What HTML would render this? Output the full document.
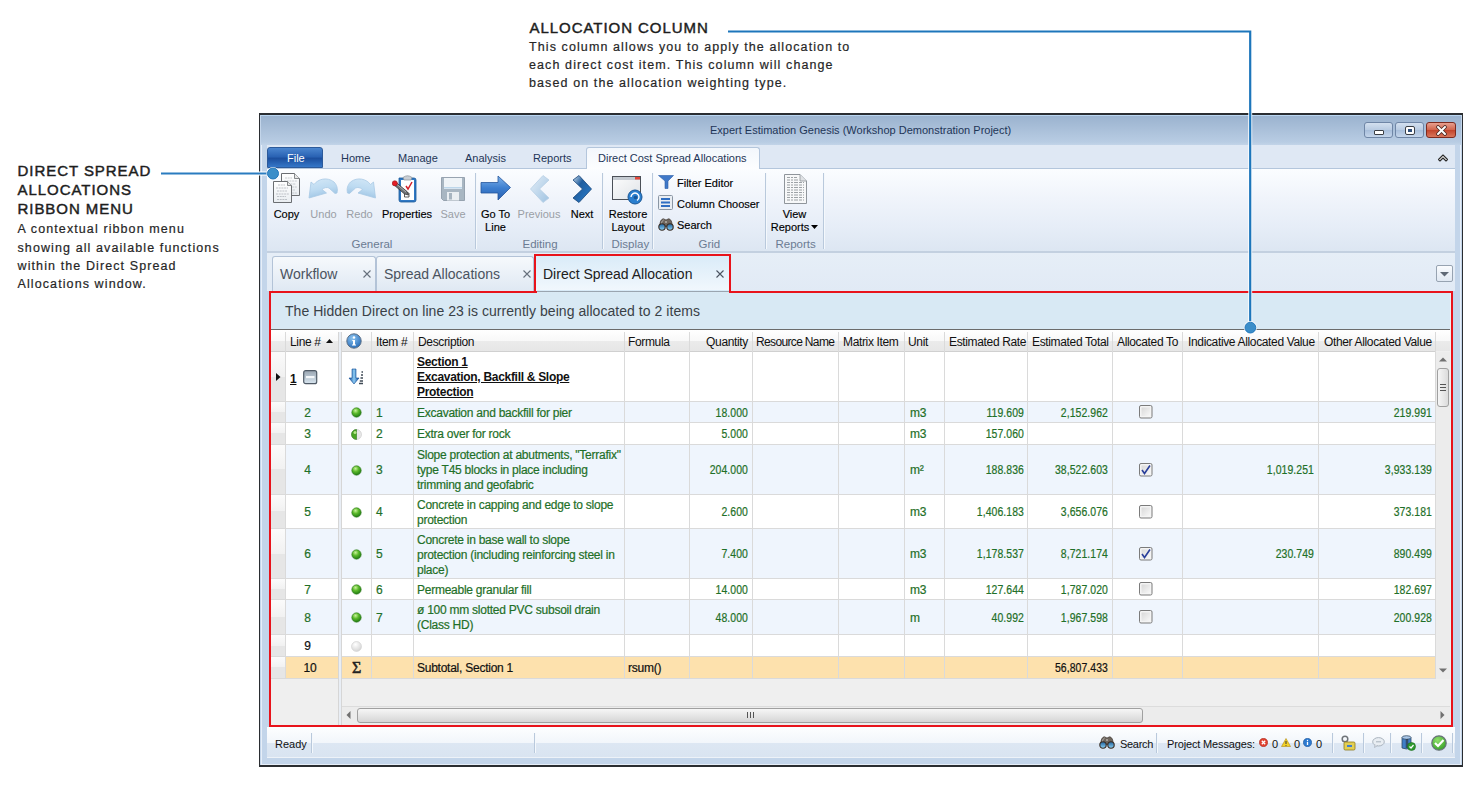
<!DOCTYPE html><html><head><meta charset="utf-8"><style>
*{margin:0;padding:0;box-sizing:border-box}
html,body{width:1480px;height:786px;overflow:hidden;background:#fff;font-family:"Liberation Sans",sans-serif}
.abs{position:absolute}
.t{position:absolute;white-space:nowrap;line-height:1}
.ann-h{position:absolute;font-weight:normal;-webkit-text-stroke:0.45px #1d1d1d;color:#1d1d1d;font-size:15px;letter-spacing:0.95px;line-height:19.3px;white-space:nowrap}
.ann-b{position:absolute;color:#262626;-webkit-text-stroke:0.2px #262626;font-size:12.5px;letter-spacing:1.1px;line-height:18.2px;white-space:nowrap}
.rl{position:absolute;font-size:11px;color:#000;-webkit-text-stroke:0.15px currentColor;text-align:center;line-height:13px;white-space:nowrap}
.rl.dis{color:#9a9fa6;-webkit-text-stroke:0}
.gl{position:absolute;font-size:11.5px;color:#6b7b92;white-space:nowrap;line-height:1}
.sep{position:absolute;width:1px;background:#b9c9dc;box-shadow:1px 0 0 #f4f8fc}
.cell{position:absolute;font-size:12px;letter-spacing:-0.25px;-webkit-text-stroke:0.2px currentColor;line-height:15px;white-space:nowrap;overflow:visible}
.g{color:#1f7028}
.num{letter-spacing:0.1px;transform:scaleX(0.87);transform-origin:100% 50%}
.vl{position:absolute;width:1px;background:#dadada}
.hl{position:absolute;height:1px;background:#dadada}
</style></head><body>

<div class="ann-h" style="left:17.5px;top:160.6px">DIRECT SPREAD<br>ALLOCATIONS<br>RIBBON MENU</div>
<div class="ann-b" style="left:17.5px;top:220.3px">A contextual ribbon menu<br>showing all available functions<br>within the Direct Spread<br>Allocations window.</div>
<div class="ann-h" style="left:529.5px;top:17.5px">ALLOCATION COLUMN</div>
<div class="ann-b" style="left:529px;top:37.5px">This column allows you to apply the allocation to<br>each direct cost item. This column will change<br>based on the allocation weighting type.</div>
<div class="abs" style="left:259px;top:112.8px;width:1203.5px;height:653.8px;border:1.5px solid #2a2d31;border-top-width:2px;border-bottom-width:2px;background:#c3d5ea"></div>
<div class="abs" style="left:260.5px;top:114.8px;width:1200.5px;height:649.8px;border:1px solid #e6eef8;border-top:none"></div>
<div class="abs" style="left:260.5px;top:114.8px;width:1200.5px;height:30.2px;background:linear-gradient(#b9d5f0 0,#b9d5f0 1px,#9bb3cf 1.2px,#b8cce3 90%,#c2d4e8)"></div>
<div class="t" style="left:710px;top:125px;font-size:11px;color:#1e3557">Expert Estimation Genesis (Workshop Demonstration Project)</div>
<div class="abs" style="left:1364px;top:122px;width:29px;height:16px;border:1px solid #6f86a6;border-radius:3px;background:linear-gradient(#d3e0ef,#b8cbe2 50%,#a7bedb 51%,#c4d5ea)"><div class="abs" style="left:9px;top:7px;width:10px;height:5px;border:1px solid #3b3f45;background:#fff;border-radius:1px"></div></div>
<div class="abs" style="left:1395px;top:122px;width:29px;height:16px;border:1px solid #6f86a6;border-radius:3px;background:linear-gradient(#d3e0ef,#b8cbe2 50%,#a7bedb 51%,#c4d5ea)"><div class="abs" style="left:9px;top:3px;width:10px;height:9px;border:1px solid #3b3f45;border-radius:2px;background:#fff"><div class="abs" style="left:2px;top:2px;width:4px;height:3px;background:#2f4f7a"></div></div></div>
<div class="abs" style="left:1426px;top:122px;width:30px;height:16px;border:1px solid #7d2a1e;border-radius:3px;background:linear-gradient(#e8a08f,#d0634b 50%,#c2432a 51%,#d9765c)"><svg class="abs" style="left:8px;top:2px" width="13" height="11" viewBox="0 0 13 11"><path d="M3 2 L10 9 M10 2 L3 9" stroke="#4a2a24" stroke-width="3.6" stroke-linecap="round"/><path d="M3 2 L10 9 M10 2 L3 9" stroke="#fff" stroke-width="2" stroke-linecap="round"/></svg></div>
<div class="abs" style="left:267px;top:145px;width:1188px;height:23px;background:#dfe8f4"></div>
<div class="abs" style="left:267px;top:168px;width:1188px;height:1px;background:#b4c6dc"></div>
<div class="abs" style="left:267px;top:147px;width:56px;height:21px;border-radius:3px 3px 0 0;background:linear-gradient(#4b86cf,#2a63b4 45%,#1c4f9e 55%,#3577c8);border:1px solid #2c5a9a"></div>
<div class="t" style="left:287px;top:153px;font-size:11px;color:#fff">File</div>
<div class="t" style="left:341px;top:153px;font-size:11px;color:#1e3557">Home</div>
<div class="t" style="left:398px;top:153px;font-size:11px;color:#1e3557">Manage</div>
<div class="t" style="left:465px;top:153px;font-size:11px;color:#1e3557">Analysis</div>
<div class="t" style="left:533px;top:153px;font-size:11px;color:#1e3557">Reports</div>
<div class="abs" style="left:586px;top:147px;width:174px;height:23px;border:1px solid #b4c6dc;border-bottom:none;border-radius:3px 3px 0 0;background:linear-gradient(#f3f7fc,#fdfeff)"></div>
<div class="t" style="left:598px;top:153px;font-size:11px;color:#1e3557">Direct Cost Spread Allocations</div>
<svg class="abs" style="left:1437px;top:152px" width="12" height="10" viewBox="0 0 12 10"><path d="M1.5 7.5 L6 3 L10.5 7.5 L9 9 L6 6 L3 9 Z" fill="#fff" stroke="#2b2b2b" stroke-width="1.1" stroke-linejoin="round"/></svg>
<div class="abs" style="left:267px;top:169px;width:1188px;height:83px;background:linear-gradient(#fbfdff,#f0f4fb 35%,#e6edf7 70%,#dce6f2)"></div>
<div class="abs" style="left:267px;top:251px;width:1188px;height:2px;background:#c3d0e0"></div>
<div class="sep" style="left:474.5px;top:173px;height:76px"></div>
<div class="sep" style="left:602.3px;top:173px;height:76px"></div>
<div class="sep" style="left:652.3px;top:173px;height:76px"></div>
<div class="sep" style="left:765px;top:173px;height:76px"></div>
<div class="sep" style="left:823px;top:173px;height:76px"></div>
<div class="gl" style="left:351.5px;top:238.5px">General</div>
<div class="gl" style="left:522.5px;top:238.5px">Editing</div>
<div class="gl" style="left:611.5px;top:238.5px">Display</div>
<div class="gl" style="left:698.5px;top:238.5px">Grid</div>
<div class="gl" style="left:775.5px;top:238.5px">Reports</div>
<div class="rl" style="left:246.5px;top:208px;width:80px">Copy</div>
<div class="rl dis" style="left:283.5px;top:208px;width:80px">Undo</div>
<div class="rl dis" style="left:319.5px;top:208px;width:80px">Redo</div>
<div class="rl" style="left:367.0px;top:208px;width:80px">Properties</div>
<div class="rl dis" style="left:413.0px;top:208px;width:80px">Save</div>
<div class="rl" style="left:455.5px;top:208px;width:80px">Go To<br>Line</div>
<div class="rl dis" style="left:499.0px;top:208px;width:80px">Previous</div>
<div class="rl" style="left:542.0px;top:208px;width:80px">Next</div>
<div class="rl" style="left:588.0px;top:208px;width:80px">Restore<br>Layout</div>
<div class="rl" style="left:754.5px;top:208px;width:80px">View<br>Reports<svg width="7" height="4" style="margin-left:2px;vertical-align:2px"><path d="M0 0H7L3.5 4Z" fill="#000"/></svg></div>
<div class="t" style="left:677px;top:177.5px;font-size:11px;color:#000;-webkit-text-stroke:0.15px #000">Filter Editor</div>
<div class="t" style="left:677px;top:199px;font-size:11px;color:#000;-webkit-text-stroke:0.15px #000">Column Chooser</div>
<div class="t" style="left:677px;top:220px;font-size:11px;color:#000;-webkit-text-stroke:0.15px #000">Search</div>
<!-- Copy -->
<svg class="abs" style="left:272px;top:172px" width="30" height="32" viewBox="0 0 30 32">
<defs><linearGradient id="pg" x1="0" y1="0" x2="0" y2="1"><stop offset="0" stop-color="#fff"/><stop offset="1" stop-color="#e9edf1"/></linearGradient></defs>
<path d="M9.5 1.5 H22.5 L27.5 6.5 V23.5 H9.5 Z" fill="url(#pg)" stroke="#6b6e72" stroke-width="1"/>
<path d="M22.5 1.5 V6.5 H27.5" fill="#e6e6e6" stroke="#6b6e72" stroke-width="0.8"/>
<path d="M13 6 H20 M12 9 H25 M13 12 H24 M12 15 H25 M13 18 H23 M12 21 H25" stroke="#a9aeb5" stroke-width="0.6" stroke-dasharray="2 0.7"/>
<path d="M1.5 9.5 H15.5 L19.5 13.5 V30.5 H1.5 Z" fill="url(#pg)" stroke="#6b6e72" stroke-width="1"/>
<path d="M15.5 9.5 V13.5 H19.5" fill="#e6e6e6" stroke="#6b6e72" stroke-width="0.8"/>
<path d="M6 13 H13 M4 16 H16 M5 19 H15 M4 22 H17 M5 24.5 H14 M5 27.5 H15" stroke="#9aa0a7" stroke-width="0.6" stroke-dasharray="2 0.7"/>
</svg>
<!-- Undo -->
<svg class="abs" style="left:305px;top:172px" width="40" height="32" viewBox="0 0 40 32">
<defs><linearGradient id="ug" x1="0" y1="0" x2="0.3" y2="1"><stop offset="0" stop-color="#d4e8f7"/><stop offset="0.6" stop-color="#bcdaf1"/><stop offset="1" stop-color="#9fc5e4"/></linearGradient></defs>
<path d="M4 26 L6 10 L9 12.5 C13 7 22 4.5 29 10 C32 13 33 17 32 21 L30 21.5 L24 16 C22 15 19 15.5 17 17.5 L21.5 21 Z" fill="url(#ug)" stroke="#a8c9e4" stroke-width="0.8" stroke-linejoin="round"/>
</svg>
<!-- Redo -->
<svg class="abs" style="left:341px;top:172px" width="40" height="32" viewBox="0 0 40 32">
<g transform="translate(38.5,0) scale(-1,1)"><path d="M4 26 L6 10 L9 12.5 C13 7 22 4.5 29 10 C32 13 33 17 32 21 L30 21.5 L24 16 C22 15 19 15.5 17 17.5 L21.5 21 Z" fill="url(#ug)" stroke="#a8c9e4" stroke-width="0.8" stroke-linejoin="round"/></g>
</svg>
<!-- Properties -->
<svg class="abs" style="left:392px;top:174px" width="26" height="30" viewBox="0 0 26 30">
<path d="M7 4 H22 Q24 4 24 6 V26 Q24 28 22 28 H9 Q7 28 7 26 Z" fill="#2f78c4" stroke="#1c5a9a" stroke-width="0.8"/>
<rect x="9" y="6" width="13" height="20" fill="#fff"/>
<path d="M11 3.5 Q15.5 0 20 3.5 L19 6 H12 Z" fill="#c9ced4" stroke="#8a9097" stroke-width="0.7"/>
<path d="M14 12 L16 15 L20 8" stroke="#d3202a" stroke-width="1.5" fill="none"/>
<path d="M12.5 19 H17 V23 H12.5Z" fill="none" stroke="#333" stroke-width="0.8"/>
<path d="M3.5 8 L15 17.5 L16.5 21 L12.5 20 L1.5 10.5 Z" fill="#6f7276" stroke="#2a2a2a" stroke-width="0.7"/>
<path d="M4 9.5 L14 18" stroke="#b9bcbf" stroke-width="0.8"/>
<circle cx="2.8" cy="9.3" r="2.6" fill="#e31e26" stroke="#8a1015" stroke-width="0.5"/>
</svg>
<!-- Save -->
<svg class="abs" style="left:440px;top:176px" width="26" height="26" viewBox="0 0 26 26">
<path d="M1.5 1.5 H24.5 V24.5 H3.5 L1.5 22.5 Z" fill="#a8b6c2" stroke="#8896a3" stroke-width="0.8"/>
<rect x="4" y="2" width="18" height="11" fill="#eef3f7"/>
<rect x="4" y="11" width="18" height="1.5" fill="#bcd6ea"/>
<rect x="7" y="16" width="12" height="8.5" fill="#e9eef2"/>
<rect x="9" y="17" width="3" height="6.5" fill="#a6b4c0"/>
</svg>
<!-- Go To Line -->
<svg class="abs" style="left:480px;top:175px" width="32" height="26" viewBox="0 0 32 26">
<defs><linearGradient id="gg" x1="0" y1="0" x2="0" y2="1"><stop offset="0" stop-color="#7fb2ea"/><stop offset="0.5" stop-color="#3d7fd0"/><stop offset="1" stop-color="#2a5fae"/></linearGradient></defs>
<path d="M1 7.5 H18 V1 L30.5 12.5 L18 25 V18 H1 Z" fill="url(#gg)" stroke="#24559c" stroke-width="0.8"/>
</svg>
<!-- Previous -->
<svg class="abs" style="left:529px;top:174px" width="22" height="30" viewBox="0 0 22 30">
<defs><linearGradient id="prg" x1="0" y1="0" x2="1" y2="1"><stop offset="0" stop-color="#e4eef7"/><stop offset="1" stop-color="#9fc3e2"/></linearGradient></defs>
<path d="M14 1.5 L20 6 L10.5 15 L20 24 L14 28.5 L1.5 15 Z" fill="url(#prg)" stroke="#b7cfe4" stroke-width="0.8"/>
</svg>
<!-- Next -->
<svg class="abs" style="left:571px;top:174px" width="22" height="30" viewBox="0 0 22 30">
<defs><linearGradient id="nxg" x1="0" y1="0" x2="1" y2="1"><stop offset="0" stop-color="#cfdfee"/><stop offset="0.35" stop-color="#1f5d9e"/><stop offset="1" stop-color="#2a7fd0"/></linearGradient></defs>
<path d="M8 1.5 L2 6 L11.5 15 L2 24 L8 28.5 L20.5 15 Z" fill="url(#nxg)" stroke="#17457a" stroke-width="0.8"/>
</svg>
<!-- Restore Layout -->
<svg class="abs" style="left:611px;top:175px" width="34" height="30" viewBox="0 0 34 30">
<defs><linearGradient id="rwg" x1="0" y1="0" x2="1" y2="1"><stop offset="0" stop-color="#fdfdfd"/><stop offset="1" stop-color="#dfe3e7"/></linearGradient></defs>
<rect x="1.5" y="1.5" width="28" height="23" fill="url(#rwg)" stroke="#4b5058" stroke-width="1"/>
<rect x="2" y="2" width="27" height="3" fill="#c4cad1"/>
<rect x="24" y="2" width="5" height="2.5" fill="#e0463a"/>
<circle cx="24" cy="22" r="7" fill="#2a7fcf" stroke="#1a5796" stroke-width="1"/>
<path d="M20 22 A4 4 0 1 1 26 25.5" stroke="#fff" stroke-width="1.4" fill="none"/>
<circle cx="24.5" cy="22.5" r="1.8" fill="#1a5796"/>
</svg>
<!-- Filter -->
<svg class="abs" style="left:658px;top:175px" width="17" height="14" viewBox="0 0 17 14">
<path d="M0.5 0.5 H15.5 L10 6 V13.5 H7 V6 Z" fill="#3f78c8" stroke="#2b5ea8" stroke-width="0.6"/>
</svg>
<!-- Column chooser -->
<svg class="abs" style="left:658px;top:195px" width="15" height="15" viewBox="0 0 15 15">
<rect x="0.5" y="0.5" width="14" height="14" rx="1" fill="#e9edf2" stroke="#8a96a4" stroke-width="1"/>
<path d="M3 4 H12 M3 7.5 H12 M3 11 H12" stroke="#2f6ec2" stroke-width="1.8"/>
</svg>
<!-- Search binoculars -->
<svg class="abs" style="left:658px;top:218px" width="16" height="13" viewBox="0 0 16 13">
<defs><linearGradient id="bl658" x1="0" y1="0" x2="0" y2="1"><stop offset="0" stop-color="#1d5f9a"/><stop offset="1" stop-color="#8fd3f5"/></linearGradient></defs>
<path d="M1.8 8.5 C1.8 4 3 1 5.5 0.8 L8 2 L10.5 0.8 C13 1 14.2 4 14.2 8.5 Z" fill="#6e665e" stroke="#2c241e" stroke-width="0.6"/>
<path d="M3.5 6 C3.8 4 4.5 2.5 5.5 2 M7 4 H9" stroke="#d8d3cc" stroke-width="1"/>
<circle cx="4" cy="9" r="3.2" fill="url(#bl658)" stroke="#3a2c22" stroke-width="1.1"/>
<circle cx="12" cy="9" r="3.2" fill="url(#bl658)" stroke="#3a2c22" stroke-width="1.1"/>
</svg>
<!-- View Reports -->
<svg class="abs" style="left:783px;top:173px" width="25" height="32" viewBox="0 0 25 32">
<path d="M1.5 1.5 H17 L23.5 8 V30.5 H1.5 Z" fill="#f7f8f9" stroke="#8f959b" stroke-width="1"/>
<path d="M17 1.5 V8 H23.5" fill="#dfe2e5" stroke="#8f959b" stroke-width="0.8"/>
<path d="M4 4.5 H14 M4 7 H16 M4 9.5 H21 M4 12 H21 M4 14.5 H21 M4 17 H21 M4 19.5 H21 M4 22 H21 M4 24.5 H21 M4 27 H21" stroke="#858b91" stroke-width="0.8" stroke-dasharray="3 1 2 1 4 1"/>
</svg>

<div class="abs" style="left:267px;top:253px;width:1188px;height:38px;background:linear-gradient(#e6eef7,#e1eaf5)"></div>
<div class="abs" style="left:272px;top:256px;width:104px;height:35px;border:1px solid #b3c3d7;border-bottom:none;border-radius:3px 3px 0 0;background:linear-gradient(#f6f9fc,#dfe8f3)"></div>
<div class="t" style="left:280px;top:267px;font-size:14px;color:#4a5360">Workflow</div>
<svg class="abs" style="left:362.5px;top:269.5px" width="8" height="8"><path d="M0.5 0.5L7.5 7.5M7.5 0.5L0.5 7.5" stroke="#66707c" stroke-width="1.1"/></svg>
<div class="abs" style="left:376px;top:256px;width:158px;height:35px;border:1px solid #b3c3d7;border-bottom:none;border-radius:3px 3px 0 0;background:linear-gradient(#f6f9fc,#dfe8f3)"></div>
<div class="t" style="left:384px;top:267px;font-size:14px;color:#4a5360">Spread Allocations</div>
<svg class="abs" style="left:522.5px;top:269.5px" width="8" height="8"><path d="M0.5 0.5L7.5 7.5M7.5 0.5L0.5 7.5" stroke="#66707c" stroke-width="1.1"/></svg>
<div class="abs" style="left:534px;top:255px;width:197px;height:37px;background:linear-gradient(#d9ebf8,#f2f8fd)"></div>
<div class="t" style="left:543px;top:267px;font-size:14px;color:#202020">Direct Spread Allocation</div>
<svg class="abs" style="left:716px;top:269.5px" width="8" height="8"><path d="M0.5 0.5L7.5 7.5M7.5 0.5L0.5 7.5" stroke="#4a5360" stroke-width="1.1"/></svg>
<div class="abs" style="left:1436px;top:264.5px;width:17px;height:17px;border:1.2px solid #97a3b1;border-radius:2px;background:linear-gradient(#fbfcfe,#eef3f9 40%,#e1e9f3)"></div>
<svg class="abs" style="left:1440px;top:272px" width="9" height="5"><path d="M0 0 H9 L4.5 4.5Z" fill="#5f6976"/></svg>
<div class="abs" style="left:269px;top:291px;width:1183px;height:436px;background:#efefef"></div>
<div class="abs" style="left:271px;top:293px;width:1179px;height:36px;background:#d8e9f4"></div>
<div class="t" style="left:285px;top:304px;font-size:14px;letter-spacing:0.05px;color:#3a4147">The Hidden Direct on line 23 is currently being allocated to 2 items</div>
<div class="abs" style="left:271px;top:329px;width:1179px;height:1px;background:#6b6b6b"></div>
<div class="abs" style="left:271px;top:330px;width:1179px;height:21px;background:linear-gradient(#ffffff,#f8f8f8 52%,#ebebeb 52%,#e6e6e6)"></div>
<div class="abs" style="left:271px;top:351px;width:1164px;height:1px;background:#d0d0d0"></div>
<div class="abs" style="left:286px;top:352px;width:1149px;height:49px;background:#fff"></div>
<div class="abs" style="left:271px;top:352px;width:14px;height:49px;background:linear-gradient(#fbfbfb,#f1f1f1 50%,#e6e6e6 50%,#e6e6e6)"></div>
<div class="hl" style="left:271px;top:401px;width:1164px"></div>
<div class="abs" style="left:286px;top:402px;width:1149px;height:20px;background:#eff5fd"></div>
<div class="abs" style="left:271px;top:402px;width:14px;height:20px;background:linear-gradient(#fbfbfb,#f1f1f1 50%,#e6e6e6 50%,#e6e6e6)"></div>
<div class="hl" style="left:271px;top:422px;width:1164px"></div>
<div class="abs" style="left:286px;top:423px;width:1149px;height:21px;background:#fff"></div>
<div class="abs" style="left:271px;top:423px;width:14px;height:21px;background:linear-gradient(#fbfbfb,#f1f1f1 50%,#e6e6e6 50%,#e6e6e6)"></div>
<div class="hl" style="left:271px;top:444px;width:1164px"></div>
<div class="abs" style="left:286px;top:445px;width:1149px;height:49px;background:#eff5fd"></div>
<div class="abs" style="left:271px;top:445px;width:14px;height:49px;background:linear-gradient(#fbfbfb,#f1f1f1 50%,#e6e6e6 50%,#e6e6e6)"></div>
<div class="hl" style="left:271px;top:494px;width:1164px"></div>
<div class="abs" style="left:286px;top:495px;width:1149px;height:33px;background:#fff"></div>
<div class="abs" style="left:271px;top:495px;width:14px;height:33px;background:linear-gradient(#fbfbfb,#f1f1f1 50%,#e6e6e6 50%,#e6e6e6)"></div>
<div class="hl" style="left:271px;top:528px;width:1164px"></div>
<div class="abs" style="left:286px;top:529px;width:1149px;height:49px;background:#eff5fd"></div>
<div class="abs" style="left:271px;top:529px;width:14px;height:49px;background:linear-gradient(#fbfbfb,#f1f1f1 50%,#e6e6e6 50%,#e6e6e6)"></div>
<div class="hl" style="left:271px;top:578px;width:1164px"></div>
<div class="abs" style="left:286px;top:579px;width:1149px;height:20px;background:#fff"></div>
<div class="abs" style="left:271px;top:579px;width:14px;height:20px;background:linear-gradient(#fbfbfb,#f1f1f1 50%,#e6e6e6 50%,#e6e6e6)"></div>
<div class="hl" style="left:271px;top:599px;width:1164px"></div>
<div class="abs" style="left:286px;top:600px;width:1149px;height:34px;background:#eff5fd"></div>
<div class="abs" style="left:271px;top:600px;width:14px;height:34px;background:linear-gradient(#fbfbfb,#f1f1f1 50%,#e6e6e6 50%,#e6e6e6)"></div>
<div class="hl" style="left:271px;top:634px;width:1164px"></div>
<div class="abs" style="left:286px;top:635px;width:1149px;height:21px;background:#fff"></div>
<div class="abs" style="left:271px;top:635px;width:14px;height:21px;background:linear-gradient(#fbfbfb,#f1f1f1 50%,#e6e6e6 50%,#e6e6e6)"></div>
<div class="hl" style="left:271px;top:656px;width:1164px"></div>
<div class="abs" style="left:286px;top:657px;width:1149px;height:21px;background:#fde1ad"></div>
<div class="abs" style="left:271px;top:657px;width:14px;height:21px;background:linear-gradient(#fbfbfb,#f1f1f1 50%,#e6e6e6 50%,#e6e6e6)"></div>
<div class="hl" style="left:271px;top:678px;width:1164px"></div>
<div class="vl" style="left:285px;top:332px;height:347px"></div>
<div class="vl" style="left:371px;top:332px;height:347px"></div>
<div class="vl" style="left:413px;top:332px;height:347px"></div>
<div class="vl" style="left:624px;top:332px;height:347px"></div>
<div class="vl" style="left:689px;top:332px;height:347px"></div>
<div class="vl" style="left:752px;top:332px;height:347px"></div>
<div class="vl" style="left:838px;top:332px;height:347px"></div>
<div class="vl" style="left:904px;top:332px;height:347px"></div>
<div class="vl" style="left:944px;top:332px;height:347px"></div>
<div class="vl" style="left:1027px;top:332px;height:347px"></div>
<div class="vl" style="left:1112px;top:332px;height:347px"></div>
<div class="vl" style="left:1182px;top:332px;height:347px"></div>
<div class="vl" style="left:1318px;top:332px;height:347px"></div>
<div class="vl" style="left:1435px;top:332px;height:347px"></div>
<div class="abs" style="left:338px;top:332px;width:4px;height:395px;background:#e9eef5;border-left:1px solid #d6d6d6;border-right:1px solid #d6d6d6"></div>
<div class="abs" style="left:271px;top:679px;width:14px;height:47px;background:#efefef"></div>
<div class="t" style="left:290px;top:335.5px;font-size:12px;letter-spacing:-0.35px;color:#111">Line #</div>
<svg class="abs" style="left:325.5px;top:339px" width="7" height="4"><path d="M0 4 H7 L3.5 0Z" fill="#111"/></svg>
<div class="t" style="left:376px;top:335.5px;font-size:12px;letter-spacing:-0.35px;color:#111">Item #</div>
<div class="t" style="left:418px;top:335.5px;font-size:12px;letter-spacing:-0.35px;color:#111">Description</div>
<div class="t" style="left:628px;top:335.5px;font-size:12px;letter-spacing:-0.35px;color:#111">Formula</div>
<div class="t" style="left:688px;top:335.5px;width:60px;text-align:right;font-size:12px;letter-spacing:-0.35px;color:#111">Quantity</div>
<div class="t" style="left:756px;top:335.5px;font-size:12px;letter-spacing:-0.65px;color:#111">Resource Name</div>
<div class="t" style="left:843px;top:335.5px;font-size:12px;letter-spacing:-0.35px;color:#111">Matrix Item</div>
<div class="t" style="left:908px;top:335.5px;font-size:12px;letter-spacing:-0.35px;color:#111">Unit</div>
<div class="t" style="left:949px;top:335.5px;font-size:12px;letter-spacing:-0.35px;color:#111">Estimated Rate</div>
<div class="t" style="left:1032px;top:335.5px;font-size:12px;letter-spacing:-0.35px;color:#111">Estimated Total</div>
<div class="t" style="left:1117px;top:335.5px;font-size:12px;letter-spacing:-0.35px;color:#111">Allocated To</div>
<div class="t" style="left:1188px;top:335.5px;font-size:12px;letter-spacing:-0.35px;color:#111">Indicative Allocated Value</div>
<div class="t" style="left:1324px;top:335.5px;font-size:12px;letter-spacing:-0.35px;color:#111">Other Allocated Value</div>
<svg class="abs" style="left:276px;top:372.5px" width="5" height="8"><path d="M0 0 V8 L4.5 4Z" fill="#111"/></svg>
<div class="cell" style="left:290px;top:371.7px;color:#111;font-weight:bold;text-decoration:underline;-webkit-text-stroke:0">1</div>
<svg class="abs" style="left:303px;top:369.5px" width="15" height="15" viewBox="0 0 15 15"><defs><linearGradient id="cl" x1="0" y1="0" x2="0" y2="1"><stop offset="0" stop-color="#9aa6b2"/><stop offset="1" stop-color="#d9e6f0"/></linearGradient></defs><rect x="0.7" y="0.7" width="13" height="13" rx="2" fill="url(#cl)" stroke="#4f5a66" stroke-width="1.2"/><rect x="3" y="6" width="8.5" height="2.2" fill="#f4f7fa"/></svg>
<svg class="abs" style="left:348px;top:368px" width="17" height="17" viewBox="0 0 17 17"><defs><linearGradient id="ar" x1="0" y1="0" x2="1" y2="0"><stop offset="0" stop-color="#0d4c9c"/><stop offset="0.5" stop-color="#8ccaf2"/><stop offset="1" stop-color="#0d4c9c"/></linearGradient></defs><path d="M4 1 H8 V10 H11 L6 16 L1 10 H4 Z" fill="url(#ar)" stroke="#0f4a94" stroke-width="0.6"/><path d="M13.5 4 H15 M13 7 H15 M12.5 10 H15 M11.8 13 H15 M11 15.5 H15" stroke="#3f4a55" stroke-width="1.3"/></svg>
<div class="cell" style="left:417px;top:355.2px;color:#111;font-weight:bold;text-decoration:underline;-webkit-text-stroke:0;letter-spacing:-0.3px">Section 1</div>
<div class="cell" style="left:417px;top:370.2px;color:#111;font-weight:bold;text-decoration:underline;-webkit-text-stroke:0;letter-spacing:-0.3px">Excavation, Backfill &amp; Slope</div>
<div class="cell" style="left:417px;top:385.2px;color:#111;font-weight:bold;text-decoration:underline;-webkit-text-stroke:0;letter-spacing:-0.3px">Protection</div>
<div class="cell" style="left:282.5px;top:405.9px;width:50px;text-align:center;color:#1f7028">2</div>
<svg class="abs" style="left:351.0px;top:407.0px" width="11" height="11" viewBox="0 0 11 11"><defs><radialGradient id="bg412" cx="0.4" cy="0.3" r="0.7"><stop offset="0" stop-color="#c9f29a"/><stop offset="0.45" stop-color="#5dbb2c"/><stop offset="1" stop-color="#1f7a12"/></radialGradient></defs><circle cx="5.5" cy="5.5" r="4.7" fill="url(#bg412)" stroke="#2f7a1e" stroke-width="0.6"/></svg>
<div class="cell" style="left:376px;top:405.9px;color:#1f7028;">1</div>
<div class="cell" style="left:417px;top:405.7px;color:#1f7028;">Excavation and backfill for pier</div>
<div class="cell num" style="left:658px;top:405.9px;width:90px;text-align:right;color:#1f7028">18.000</div>
<div class="cell" style="left:910px;top:405.9px;color:#1f7028;">m3</div>
<div class="cell num" style="left:933.5px;top:405.9px;width:90px;text-align:right;color:#1f7028">119.609</div>
<div class="cell num" style="left:1018px;top:405.9px;width:90px;text-align:right;color:#1f7028">2,152.962</div>
<svg class="abs" style="left:1139px;top:405.0px" width="14" height="14" viewBox="0 0 14 14"><defs><linearGradient id="cbg412" x1="0" y1="0" x2="1" y2="1"><stop offset="0" stop-color="#d9d9d9"/><stop offset="1" stop-color="#f7f7f7"/></linearGradient></defs><rect x="0.5" y="0.5" width="12.5" height="12.5" rx="1.5" fill="#f4f4f4" stroke="#7b7b7b" stroke-width="1"/><rect x="2.5" y="2.5" width="8.5" height="8.5" fill="url(#cbg412)"/></svg>
<div class="cell num" style="left:1342px;top:405.9px;width:90px;text-align:right;color:#1f7028">219.991</div>
<div class="cell" style="left:282.5px;top:427.4px;width:50px;text-align:center;color:#1f7028">3</div>
<svg class="abs" style="left:351.0px;top:428.5px" width="11" height="11" viewBox="0 0 11 11"><circle cx="5.5" cy="5.5" r="5" fill="#e8e8e8" stroke="#c8c8c8" stroke-width="0.6"/><path d="M5.5 0.5 A5 5 0 0 0 5.5 10.5 Z" fill="#4aa624" stroke="#2f7a1e" stroke-width="0.6"/><circle cx="4" cy="3.5" r="1.5" fill="#b5e58a"/></svg>
<div class="cell" style="left:376px;top:427.4px;color:#1f7028;">2</div>
<div class="cell" style="left:417px;top:427.2px;color:#1f7028;">Extra over for rock</div>
<div class="cell num" style="left:658px;top:427.4px;width:90px;text-align:right;color:#1f7028">5.000</div>
<div class="cell" style="left:910px;top:427.4px;color:#1f7028;">m3</div>
<div class="cell num" style="left:933.5px;top:427.4px;width:90px;text-align:right;color:#1f7028">157.060</div>
<div class="cell" style="left:282.5px;top:463.4px;width:50px;text-align:center;color:#1f7028">4</div>
<svg class="abs" style="left:351.0px;top:464.5px" width="11" height="11" viewBox="0 0 11 11"><defs><radialGradient id="bg470" cx="0.4" cy="0.3" r="0.7"><stop offset="0" stop-color="#c9f29a"/><stop offset="0.45" stop-color="#5dbb2c"/><stop offset="1" stop-color="#1f7a12"/></radialGradient></defs><circle cx="5.5" cy="5.5" r="4.7" fill="url(#bg470)" stroke="#2f7a1e" stroke-width="0.6"/></svg>
<div class="cell" style="left:376px;top:463.4px;color:#1f7028;">3</div>
<div class="cell" style="left:417px;top:447.7px;color:#1f7028;">Slope protection at abutments, "Terrafix"</div>
<div class="cell" style="left:417px;top:462.7px;color:#1f7028;">type T45 blocks in place including</div>
<div class="cell" style="left:417px;top:477.7px;color:#1f7028;">trimming and geofabric</div>
<div class="cell num" style="left:658px;top:463.4px;width:90px;text-align:right;color:#1f7028">204.000</div>
<div class="cell" style="left:910px;top:463.4px;color:#1f7028;">m&#178;</div>
<div class="cell num" style="left:933.5px;top:463.4px;width:90px;text-align:right;color:#1f7028">188.836</div>
<div class="cell num" style="left:1018px;top:463.4px;width:90px;text-align:right;color:#1f7028">38,522.603</div>
<svg class="abs" style="left:1139px;top:462.5px" width="14" height="14" viewBox="0 0 14 14"><defs><linearGradient id="cbg470" x1="0" y1="0" x2="1" y2="1"><stop offset="0" stop-color="#d9d9d9"/><stop offset="1" stop-color="#f7f7f7"/></linearGradient></defs><rect x="0.5" y="0.5" width="12.5" height="12.5" rx="1.5" fill="#f4f4f4" stroke="#7b7b7b" stroke-width="1"/><rect x="2.5" y="2.5" width="8.5" height="8.5" fill="url(#cbg470)"/><path d="M3 7 L5.5 10.5 L11 2.5" stroke="#2a3f9a" stroke-width="1.6" fill="none"/></svg>
<div class="cell num" style="left:1224px;top:463.4px;width:90px;text-align:right;color:#1f7028">1,019.251</div>
<div class="cell num" style="left:1342px;top:463.4px;width:90px;text-align:right;color:#1f7028">3,933.139</div>
<div class="cell" style="left:282.5px;top:505.4px;width:50px;text-align:center;color:#1f7028">5</div>
<svg class="abs" style="left:351.0px;top:506.5px" width="11" height="11" viewBox="0 0 11 11"><defs><radialGradient id="bg512" cx="0.4" cy="0.3" r="0.7"><stop offset="0" stop-color="#c9f29a"/><stop offset="0.45" stop-color="#5dbb2c"/><stop offset="1" stop-color="#1f7a12"/></radialGradient></defs><circle cx="5.5" cy="5.5" r="4.7" fill="url(#bg512)" stroke="#2f7a1e" stroke-width="0.6"/></svg>
<div class="cell" style="left:376px;top:505.4px;color:#1f7028;">4</div>
<div class="cell" style="left:417px;top:497.7px;color:#1f7028;">Concrete in capping and edge to slope</div>
<div class="cell" style="left:417px;top:512.7px;color:#1f7028;">protection</div>
<div class="cell num" style="left:658px;top:505.4px;width:90px;text-align:right;color:#1f7028">2.600</div>
<div class="cell" style="left:910px;top:505.4px;color:#1f7028;">m3</div>
<div class="cell num" style="left:933.5px;top:505.4px;width:90px;text-align:right;color:#1f7028">1,406.183</div>
<div class="cell num" style="left:1018px;top:505.4px;width:90px;text-align:right;color:#1f7028">3,656.076</div>
<svg class="abs" style="left:1139px;top:504.5px" width="14" height="14" viewBox="0 0 14 14"><defs><linearGradient id="cbg512" x1="0" y1="0" x2="1" y2="1"><stop offset="0" stop-color="#d9d9d9"/><stop offset="1" stop-color="#f7f7f7"/></linearGradient></defs><rect x="0.5" y="0.5" width="12.5" height="12.5" rx="1.5" fill="#f4f4f4" stroke="#7b7b7b" stroke-width="1"/><rect x="2.5" y="2.5" width="8.5" height="8.5" fill="url(#cbg512)"/></svg>
<div class="cell num" style="left:1342px;top:505.4px;width:90px;text-align:right;color:#1f7028">373.181</div>
<div class="cell" style="left:282.5px;top:547.4px;width:50px;text-align:center;color:#1f7028">6</div>
<svg class="abs" style="left:351.0px;top:548.5px" width="11" height="11" viewBox="0 0 11 11"><defs><radialGradient id="bg554" cx="0.4" cy="0.3" r="0.7"><stop offset="0" stop-color="#c9f29a"/><stop offset="0.45" stop-color="#5dbb2c"/><stop offset="1" stop-color="#1f7a12"/></radialGradient></defs><circle cx="5.5" cy="5.5" r="4.7" fill="url(#bg554)" stroke="#2f7a1e" stroke-width="0.6"/></svg>
<div class="cell" style="left:376px;top:547.4px;color:#1f7028;">5</div>
<div class="cell" style="left:417px;top:532.7px;color:#1f7028;">Concrete in base wall to slope</div>
<div class="cell" style="left:417px;top:547.7px;color:#1f7028;">protection (including reinforcing steel in</div>
<div class="cell" style="left:417px;top:562.7px;color:#1f7028;">place)</div>
<div class="cell num" style="left:658px;top:547.4px;width:90px;text-align:right;color:#1f7028">7.400</div>
<div class="cell" style="left:910px;top:547.4px;color:#1f7028;">m3</div>
<div class="cell num" style="left:933.5px;top:547.4px;width:90px;text-align:right;color:#1f7028">1,178.537</div>
<div class="cell num" style="left:1018px;top:547.4px;width:90px;text-align:right;color:#1f7028">8,721.174</div>
<svg class="abs" style="left:1139px;top:546.5px" width="14" height="14" viewBox="0 0 14 14"><defs><linearGradient id="cbg554" x1="0" y1="0" x2="1" y2="1"><stop offset="0" stop-color="#d9d9d9"/><stop offset="1" stop-color="#f7f7f7"/></linearGradient></defs><rect x="0.5" y="0.5" width="12.5" height="12.5" rx="1.5" fill="#f4f4f4" stroke="#7b7b7b" stroke-width="1"/><rect x="2.5" y="2.5" width="8.5" height="8.5" fill="url(#cbg554)"/><path d="M3 7 L5.5 10.5 L11 2.5" stroke="#2a3f9a" stroke-width="1.6" fill="none"/></svg>
<div class="cell num" style="left:1224px;top:547.4px;width:90px;text-align:right;color:#1f7028">230.749</div>
<div class="cell num" style="left:1342px;top:547.4px;width:90px;text-align:right;color:#1f7028">890.499</div>
<div class="cell" style="left:282.5px;top:582.9px;width:50px;text-align:center;color:#1f7028">7</div>
<svg class="abs" style="left:351.0px;top:584.0px" width="11" height="11" viewBox="0 0 11 11"><defs><radialGradient id="bg589" cx="0.4" cy="0.3" r="0.7"><stop offset="0" stop-color="#c9f29a"/><stop offset="0.45" stop-color="#5dbb2c"/><stop offset="1" stop-color="#1f7a12"/></radialGradient></defs><circle cx="5.5" cy="5.5" r="4.7" fill="url(#bg589)" stroke="#2f7a1e" stroke-width="0.6"/></svg>
<div class="cell" style="left:376px;top:582.9px;color:#1f7028;">6</div>
<div class="cell" style="left:417px;top:583.2px;color:#1f7028;">Permeable granular fill</div>
<div class="cell num" style="left:658px;top:582.9px;width:90px;text-align:right;color:#1f7028">14.000</div>
<div class="cell" style="left:910px;top:582.9px;color:#1f7028;">m3</div>
<div class="cell num" style="left:933.5px;top:582.9px;width:90px;text-align:right;color:#1f7028">127.644</div>
<div class="cell num" style="left:1018px;top:582.9px;width:90px;text-align:right;color:#1f7028">1,787.020</div>
<svg class="abs" style="left:1139px;top:582.0px" width="14" height="14" viewBox="0 0 14 14"><defs><linearGradient id="cbg589" x1="0" y1="0" x2="1" y2="1"><stop offset="0" stop-color="#d9d9d9"/><stop offset="1" stop-color="#f7f7f7"/></linearGradient></defs><rect x="0.5" y="0.5" width="12.5" height="12.5" rx="1.5" fill="#f4f4f4" stroke="#7b7b7b" stroke-width="1"/><rect x="2.5" y="2.5" width="8.5" height="8.5" fill="url(#cbg589)"/></svg>
<div class="cell num" style="left:1342px;top:582.9px;width:90px;text-align:right;color:#1f7028">182.697</div>
<div class="cell" style="left:282.5px;top:610.9px;width:50px;text-align:center;color:#1f7028">8</div>
<svg class="abs" style="left:351.0px;top:612.0px" width="11" height="11" viewBox="0 0 11 11"><defs><radialGradient id="bg617" cx="0.4" cy="0.3" r="0.7"><stop offset="0" stop-color="#c9f29a"/><stop offset="0.45" stop-color="#5dbb2c"/><stop offset="1" stop-color="#1f7a12"/></radialGradient></defs><circle cx="5.5" cy="5.5" r="4.7" fill="url(#bg617)" stroke="#2f7a1e" stroke-width="0.6"/></svg>
<div class="cell" style="left:376px;top:610.9px;color:#1f7028;">7</div>
<div class="cell" style="left:417px;top:603.2px;color:#1f7028;">&#248; 100 mm slotted PVC subsoil drain</div>
<div class="cell" style="left:417px;top:618.2px;color:#1f7028;">(Class HD)</div>
<div class="cell num" style="left:658px;top:610.9px;width:90px;text-align:right;color:#1f7028">48.000</div>
<div class="cell" style="left:910px;top:610.9px;color:#1f7028;">m</div>
<div class="cell num" style="left:933.5px;top:610.9px;width:90px;text-align:right;color:#1f7028">40.992</div>
<div class="cell num" style="left:1018px;top:610.9px;width:90px;text-align:right;color:#1f7028">1,967.598</div>
<svg class="abs" style="left:1139px;top:610.0px" width="14" height="14" viewBox="0 0 14 14"><defs><linearGradient id="cbg617" x1="0" y1="0" x2="1" y2="1"><stop offset="0" stop-color="#d9d9d9"/><stop offset="1" stop-color="#f7f7f7"/></linearGradient></defs><rect x="0.5" y="0.5" width="12.5" height="12.5" rx="1.5" fill="#f4f4f4" stroke="#7b7b7b" stroke-width="1"/><rect x="2.5" y="2.5" width="8.5" height="8.5" fill="url(#cbg617)"/></svg>
<div class="cell num" style="left:1342px;top:610.9px;width:90px;text-align:right;color:#1f7028">200.928</div>
<div class="cell" style="left:282.5px;top:639.4px;width:50px;text-align:center;color:#111">9</div>
<svg class="abs" style="left:351.0px;top:640.5px" width="11" height="11" viewBox="0 0 11 11"><defs><radialGradient id="gy" cx="0.4" cy="0.3" r="0.7"><stop offset="0" stop-color="#ffffff"/><stop offset="1" stop-color="#d5d5d5"/></radialGradient></defs><circle cx="5.5" cy="5.5" r="5" fill="url(#gy)" stroke="#d0d0d0" stroke-width="0.6"/></svg>
<div class="cell" style="left:285.0px;top:661.4px;width:50px;text-align:center;color:#111">10</div>
<div class="cell" style="left:352px;top:660.0px;font-family:'Liberation Serif',serif;font-size:16px;font-weight:normal;-webkit-text-stroke:0.5px #222;letter-spacing:0;color:#222;line-height:15px">&#931;</div>
<div class="cell" style="left:417px;top:661.4px;color:#111;">Subtotal, Section 1</div>
<div class="cell" style="left:628px;top:661.4px;color:#111;">rsum()</div>
<div class="cell num" style="left:1018px;top:661.4px;width:90px;text-align:right;color:#111">56,807.433</div>
<div class="abs" style="left:1436px;top:352px;width:14px;height:327px;background:#ececec"></div>
<svg class="abs" style="left:1439px;top:357px" width="8" height="5"><path d="M0 4.5 H8 L4 0.5Z" fill="#707070"/></svg>
<svg class="abs" style="left:1439px;top:668px" width="8" height="5"><path d="M0 0.5 H8 L4 4.5Z" fill="#707070"/></svg>
<div class="abs" style="left:1437px;top:368px;width:12px;height:39px;border:1px solid #a0a0a0;border-radius:3px;background:linear-gradient(90deg,#f6f6f6,#dcdcdc)"></div>
<div class="abs" style="left:1440px;top:384px;width:6px;height:7px;background:repeating-linear-gradient(#555 0 1px,transparent 1px 3px)"></div>
<div class="abs" style="left:342px;top:706px;width:1108px;height:19px;background:#ececec;border-top:1px solid #dcdcdc"></div>
<svg class="abs" style="left:346px;top:711px" width="5" height="8"><path d="M4.5 0 V8 L0.5 4Z" fill="#707070"/></svg>
<svg class="abs" style="left:1440px;top:711px" width="5" height="8"><path d="M0.5 0 V8 L4.5 4Z" fill="#707070"/></svg>
<div class="abs" style="left:357px;top:708px;width:786px;height:15px;border:1px solid #a0a0a0;border-radius:3px;background:linear-gradient(#f6f6f6,#d6d6d6)"></div>
<div class="abs" style="left:747px;top:712px;width:7px;height:6px;background:repeating-linear-gradient(90deg,#555 0 1px,transparent 1px 3px)"></div>
<div class="abs" style="left:268.7px;top:290.7px;width:1184.5px;height:436.1px;border:2.5px solid #e8131b"></div>
<div class="abs" style="left:533.5px;top:254.3px;width:197.4px;height:39px;border:2.5px solid #e8131b;border-bottom:none"></div>
<div class="abs" style="left:536.5px;top:290px;width:192px;height:3px;background:linear-gradient(#d9ebf8,#d8e9f4)"></div>
<div class="abs" style="left:536.5px;top:291px;width:192px;height:1px;background:#9aa5b0"></div>
<div class="abs" style="left:267px;top:727px;width:1188px;height:30px;background:linear-gradient(#fdfeff,#f2f6fb 52%,#dde7f3 52%,#d9e4f1)"></div>
<div class="abs" style="left:267px;top:757px;width:1188px;height:1px;background:#edf2f8"></div>
<div class="t" style="left:275px;top:739px;font-size:11px;color:#111">Ready</div>
<div class="sep" style="left:311px;top:733px;height:20px"></div>
<div class="sep" style="left:534px;top:733px;height:20px"></div>
<div class="sep" style="left:1156px;top:733px;height:20px"></div>
<div class="sep" style="left:1332px;top:733px;height:20px"></div>
<div class="sep" style="left:1363px;top:733px;height:20px"></div>
<div class="sep" style="left:1390px;top:733px;height:20px"></div>
<div class="sep" style="left:1421px;top:733px;height:20px"></div>
<div class="sep" style="left:1452px;top:733px;height:20px"></div>
<div class="t" style="left:1120px;top:739px;font-size:11px;letter-spacing:-0.3px;color:#111">Search</div>
<div class="t" style="left:1167px;top:739px;font-size:11px;letter-spacing:-0.15px;color:#111">Project Messages:</div>
<div class="t" style="left:1272px;top:739px;font-size:11px;color:#111">0</div>
<div class="t" style="left:1294px;top:739px;font-size:11px;color:#111">0</div>
<div class="t" style="left:1316px;top:739px;font-size:11px;color:#111">0</div>
<!-- info header icon -->
<svg class="abs" style="left:346px;top:333px" width="16" height="16" viewBox="0 0 16 16"><defs><radialGradient id="ih" cx="0.4" cy="0.3" r="0.8"><stop offset="0" stop-color="#8cc4f0"/><stop offset="1" stop-color="#1e64b4"/></radialGradient></defs><circle cx="8" cy="8" r="7.2" fill="url(#ih)" stroke="#5b6f86" stroke-width="1"/><circle cx="8" cy="4.5" r="1.2" fill="#fff"/><path d="M6.3 7 H9 V11.5 H10 V12.5 H6 V11.5 H7 V8 H6.3Z" fill="#fff"/></svg>
<!-- status binoculars -->
<svg class="abs" style="left:1099px;top:736px" width="16" height="13" viewBox="0 0 16 13">
<defs><linearGradient id="bl1099" x1="0" y1="0" x2="0" y2="1"><stop offset="0" stop-color="#1d5f9a"/><stop offset="1" stop-color="#8fd3f5"/></linearGradient></defs>
<path d="M1.8 8.5 C1.8 4 3 1 5.5 0.8 L8 2 L10.5 0.8 C13 1 14.2 4 14.2 8.5 Z" fill="#6e665e" stroke="#2c241e" stroke-width="0.6"/>
<path d="M3.5 6 C3.8 4 4.5 2.5 5.5 2 M7 4 H9" stroke="#d8d3cc" stroke-width="1"/>
<circle cx="4" cy="9" r="3.2" fill="url(#bl1099)" stroke="#3a2c22" stroke-width="1.1"/>
<circle cx="12" cy="9" r="3.2" fill="url(#bl1099)" stroke="#3a2c22" stroke-width="1.1"/>
</svg>
<!-- error -->
<svg class="abs" style="left:1259px;top:738px" width="9" height="9" viewBox="0 0 9 9"><circle cx="4.5" cy="4.5" r="4.2" fill="#e0402f" stroke="#a02418" stroke-width="0.5"/><path d="M2.8 2.8 L6.2 6.2 M6.2 2.8 L2.8 6.2" stroke="#fff" stroke-width="1.3"/></svg>
<!-- warning -->
<svg class="abs" style="left:1281px;top:738px" width="10" height="9" viewBox="0 0 10 9"><path d="M5 0.5 L9.5 8.5 H0.5 Z" fill="#f5d327" stroke="#b08a10" stroke-width="0.6"/><path d="M5 3 V6 M5 7 V7.8" stroke="#333" stroke-width="1"/></svg>
<!-- info -->
<svg class="abs" style="left:1303px;top:738px" width="9" height="9" viewBox="0 0 9 9"><circle cx="4.5" cy="4.5" r="4.2" fill="#2c7ad0" stroke="#1b4f8e" stroke-width="0.5"/><path d="M4.5 3.8 V7" stroke="#fff" stroke-width="1.3"/><circle cx="4.5" cy="2.4" r="0.7" fill="#fff"/></svg>
<!-- lock -->
<svg class="abs" style="left:1341px;top:735px" width="15" height="16" viewBox="0 0 15 16"><circle cx="4" cy="4" r="2.8" fill="none" stroke="#6f7479" stroke-width="1.5"/><rect x="3" y="7" width="11" height="8" rx="1.2" fill="#e3cf52" stroke="#8e7a1c" stroke-width="0.8"/><rect x="6" y="10" width="5" height="2" fill="#3f7ed0"/></svg>
<!-- speech bubble -->
<svg class="abs" style="left:1372px;top:737px" width="13" height="11" viewBox="0 0 13 11"><ellipse cx="6.5" cy="4.8" rx="5.8" ry="4.2" fill="#e8edf2" stroke="#a9b3bd" stroke-width="1"/><path d="M3 8 L2.5 10.5 L5.5 8.5" fill="#e8edf2" stroke="#a9b3bd" stroke-width="0.8"/><path d="M4 4.8 H9" stroke="#a9b3bd" stroke-width="1"/></svg>
<!-- db -->
<svg class="abs" style="left:1401px;top:735px" width="15" height="16" viewBox="0 0 15 16"><path d="M1 2.5 V13 Q5.5 15 10 13 V2.5 Z" fill="#3f7fc8" stroke="#344c66" stroke-width="0.8"/><ellipse cx="5.5" cy="2.5" rx="4.5" ry="1.8" fill="#a9c7e8" stroke="#344c66" stroke-width="0.8"/><path d="M6 4 V13" stroke="#2a2f35" stroke-width="2.5" opacity="0.6"/><circle cx="10.5" cy="11.5" r="4" fill="#2f9a2f" stroke="#1d6a1d" stroke-width="0.6"/><path d="M8.5 11.5 L10 13 L12.5 10" stroke="#fff" stroke-width="1.2" fill="none"/></svg>
<!-- green check -->
<svg class="abs" style="left:1431px;top:735px" width="16" height="16" viewBox="0 0 16 16"><defs><radialGradient id="gc" cx="0.4" cy="0.3" r="0.8"><stop offset="0" stop-color="#8fe06a"/><stop offset="1" stop-color="#2f9a22"/></radialGradient></defs><circle cx="8" cy="8" r="7.2" fill="url(#gc)" stroke="#68707a" stroke-width="1.2"/><path d="M4 8 L7 11 L12.5 5" stroke="#fff" stroke-width="2.2" fill="none"/></svg>

<svg class="abs" style="left:0;top:0" width="1480" height="786" viewBox="0 0 1480 786">
<path d="M161 173.5 H273" stroke="#fff" stroke-width="4"/>
<path d="M161 173.5 H273" stroke="#2a7cc0" stroke-width="2"/>
<circle cx="273" cy="173.5" r="6.5" fill="#fff"/>
<circle cx="273" cy="173.5" r="5.5" fill="#3b8ec9" stroke="#2377bb" stroke-width="1"/>
<path d="M728 31.5 H1250.2 V327" stroke="#fff" stroke-width="4" fill="none" opacity="0.9"/>
<path d="M728 31.5 H1250.2 V327" stroke="#1d76bb" stroke-width="2.2" fill="none"/>
<circle cx="1250.4" cy="327.6" r="6.5" fill="#fff"/>
<circle cx="1250.4" cy="327.6" r="5.4" fill="#3b8ec9" stroke="#2377bb" stroke-width="1"/>
</svg>
</body></html>
